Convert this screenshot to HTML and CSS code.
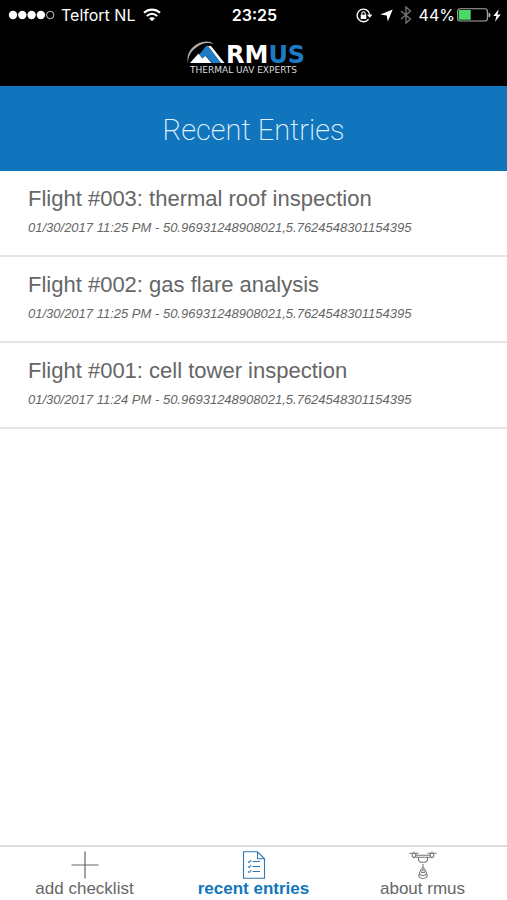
FILE: index.html
```html
<!DOCTYPE html>
<html lang="en">
<head>
<meta charset="utf-8">
<meta name="viewport" content="width=device-width, initial-scale=1">
<title>Recent Entries</title>
<link rel="stylesheet" href="styles.css">
</head>
<body>
<header class="top">
  <div class="status">
    <div class="status-group">
      <svg class="signal" width="47" height="10" viewBox="0 0 47 10" aria-hidden="true">
        <g fill="#fff"><circle cx="5" cy="5" r="4.2"/><circle cx="14.3" cy="5" r="4.2"/><circle cx="23.6" cy="5" r="4.2"/><circle cx="32.9" cy="5" r="4.2"/></g>
        <circle cx="42.2" cy="5" r="3.7" fill="none" stroke="#ccc"/>
      </svg>
      <span class="carrier">Telfort NL</span>
      <svg class="wifi" width="18" height="14" viewBox="0 0 18 14" fill="none" stroke="#fff" stroke-width="2.1" aria-hidden="true">
        <path d="M1 4.8C5.6.6 12.4.6 17 4.8M3.8 8C7 5.2 11 5.2 14.2 8"/>
        <path d="M9 13.2 6 10.2C7.8 8.8 10.2 8.8 12 10.2Z" fill="#fff" stroke="none"/>
      </svg>
    </div>
    <span class="clock">23:25</span>
    <div class="status-group status-right">
      <svg width="17" height="15" viewBox="0 0 17 15" fill="none" stroke="#fff" stroke-width="1.4" aria-hidden="true">
        <path d="M12.6 11.1A6.3 6.3 0 1 1 13.7 6.5"/>
        <path d="M11 6.6H16.4L13.7 10Z" fill="#fff" stroke="none"/>
        <path d="M4.7 6.8H10.3V11H4.7Z" fill="#fff" stroke="none"/>
        <path d="M5.8 7V5.5a1.7 1.7 0 0 1 3.4 0V7" stroke-width="1.1"/>
      </svg>
      <svg width="13" height="13" viewBox="0 0 13 13" aria-hidden="true"><path d="M12.7.4 7.8 12.6 6.7 6.6.4 5.4Z" fill="#fff"/></svg>
      <svg width="12" height="18" viewBox="0 0 12 18" fill="none" stroke="#777" stroke-width="1.3" aria-hidden="true"><path d="M1 5 10.5 13 6 17V1L10.5 5 1 13"/></svg>
      <div class="power">
        <span>44%</span>
        <svg width="34" height="14" viewBox="0 0 34 14" aria-hidden="true">
          <rect x=".6" y=".8" width="29.8" height="12.2" rx="2.5" fill="none" stroke="#aaa" stroke-width="1.1"/>
          <path d="M2.8 2H13.7V11.8H2.8Q1.8 11.8 1.8 10.8V3Q1.8 2 2.8 2Z" fill="#4cd964"/>
          <path d="M31.5 4.4Q33.5 5 33.5 7T31.5 9.6Z" fill="#bbb"/>
        </svg>
        <svg width="8" height="13" viewBox="0 0 8 13" aria-hidden="true"><path d="M5.7.3.3 7H3.4L2 12.7 7.8 5.5H4.5Z" fill="#fff"/></svg>
      </div>
    </div>
  </div>
  <div class="brand">
    <svg class="logo" width="136" height="36" viewBox="0 0 136 36" role="img" aria-label="RMUS Thermal UAV Experts">
      <path d="M2 24C-1 13 9 3 20 2.5 24 2.3 26 3.4 28 5 22 3 16 4 11 8 5 12 2 17 2 24Z" fill="#aaa"/>
      <path d="M21 6 35 24H26L20 17 15 20 12 17Z" fill="#1d7bc5"/>
      <path d="M4 24 12.5 14.5 16 19.5 19.5 17 25.5 24Z" fill="#fff"/>
      <path d="M22 7 25 7 38.5 24H35Z" fill="#fff"/>
      <text class="logo-name" x="40" y="24"><tspan fill="#fff">RM</tspan><tspan fill="#1d7bc5">US</tspan></text>
      <text class="logo-tag" x="4" y="34">THERMAL UAV EXPERTS</text>
    </svg>
  </div>
</header>
<h1 class="title">Recent Entries</h1>
<main class="content">
  <ul class="entries">
    <li><a class="entry" href="#flight-003"><span class="entry-name">Flight #003: thermal roof inspection</span><span class="entry-meta">01/30/2017 11:25 PM - 50.96931248908021,5.7624548301154395</span></a></li>
    <li><a class="entry" href="#flight-002"><span class="entry-name">Flight #002: gas flare analysis</span><span class="entry-meta">01/30/2017 11:25 PM - 50.96931248908021,5.7624548301154395</span></a></li>
    <li><a class="entry" href="#flight-001"><span class="entry-name">Flight #001: cell tower inspection</span><span class="entry-meta">01/30/2017 11:24 PM - 50.96931248908021,5.7624548301154395</span></a></li>
  </ul>
</main>
<nav class="tabs">
  <a class="tab" href="#add">
    <svg width="28" height="28" viewBox="0 0 28 28" fill="none" stroke="#666" stroke-width="1.2" aria-hidden="true"><path d="M14 .5V27.5M.5 14H27.5"/></svg>
    <span>add checklist</span>
  </a>
  <a class="tab active" href="#recent" aria-current="page">
    <svg width="28" height="28" viewBox="0 0 28 28" fill="none" stroke="#3277ad" stroke-width="1.1" aria-hidden="true">
      <path d="M3.5.8H17.5L24.5 7.8V27.2H3.5ZM17.5.8V7.8H24.5"/>
      <path d="M8 10.3 9.2 11.5 11.3 9M8 15.3 9.2 16.5 11.3 14M8 20.3 9.2 21.5 11.3 19M12.5 10.5H20M12.5 15.5H20M12.5 20.5H20"/>
    </svg>
    <span>recent entries</span>
  </a>
  <a class="tab" href="#about">
    <svg width="28" height="28" viewBox="0 0 28 28" fill="none" stroke="#777" stroke-width="1.1" aria-hidden="true">
      <path d="M.5 2.3H9.5M18.5 2.3H27.5M5 .6V3M23 .6V3M3.3 2.5V5.5L5 6.8 6.7 5.5V2.5M21.3 2.5V5.5L23 6.8 24.7 5.5V2.5"/>
      <path d="M6.7 4.3H21.3M6.7 6.2H21.3M9.5 6.5V9.3L11.5 11.2H16.5L18.5 9.3V6.5M14 13V17"/>
      <circle cx="14" cy="18" r="1.3"/>
      <path d="M11.6 18.5C10.6 22.5 17.4 22.5 16.4 18.5M10.7 20.8C8.6 25.8 19.4 25.8 17.3 20.8M10 23.3C7.6 28.8 20.4 28.8 18 23.3"/>
    </svg>
    <span>about rmus</span>
  </a>
</nav>
</body>
</html>
```
FILE: styles.css
```css
* { box-sizing: border-box; }

body {
  margin: 0;
  min-height: 100vh;
  display: flex;
  flex-direction: column;
  background: #fff;
  color: #666;
  font-family: "Liberation Sans", Arial, sans-serif;
}

a { color: inherit; text-decoration: none; }

svg { display: block; flex: none; }

.top { background: #000; color: #fff; }

.status {
  display: grid;
  grid-template-columns: 1fr auto 1fr;
  align-items: center;
  height: 30px;
  padding: 0 6px 0 8px;
  font: 400 16px/30px Inter, sans-serif;
}

.status-group { display: flex; align-items: center; gap: 6px; }
.status-right { gap: 7px; justify-content: flex-end; }
.power { display: flex; align-items: center; gap: 2px; }
.wifi { margin-left: 2px; }
.clock { font-weight: 600; }

.brand {
  display: flex;
  justify-content: center;
  height: 56px;
  padding-top: 9px;
}

.logo-name { font: bold 24px "DejaVu Sans", sans-serif; }
.logo-tag { font: 9px "DejaVu Sans", sans-serif; fill: #ddd; }

.title {
  margin: 0;
  padding: 26px 16px 23px;
  background: #1075bc;
  color: #e3f2ff;
  font: 200 29px/36px Roboto, sans-serif;
  text-align: center;
}

.content { flex: 1; }

.entries { margin: 0; padding: 0; list-style: none; }

.entry {
  display: flex;
  flex-direction: column;
  gap: 7px;
  padding: 14px 28px 19px;
  border-bottom: 2px solid #e4e4e4;
}

.entry-name { font-size: 22px; line-height: 28px; }
.entry-meta { font-size: 13px; line-height: 16px; font-style: italic; }

.tabs {
  display: grid;
  grid-template-columns: repeat(3, 1fr);
  border-top: 2px solid #dcdcdc;
}

.tab {
  display: flex;
  flex-direction: column;
  align-items: center;
  padding: 4px 0 1px;
  font-size: 17px;
  line-height: 20px;
}

.active { color: #1075bc; font-weight: bold; }
```
